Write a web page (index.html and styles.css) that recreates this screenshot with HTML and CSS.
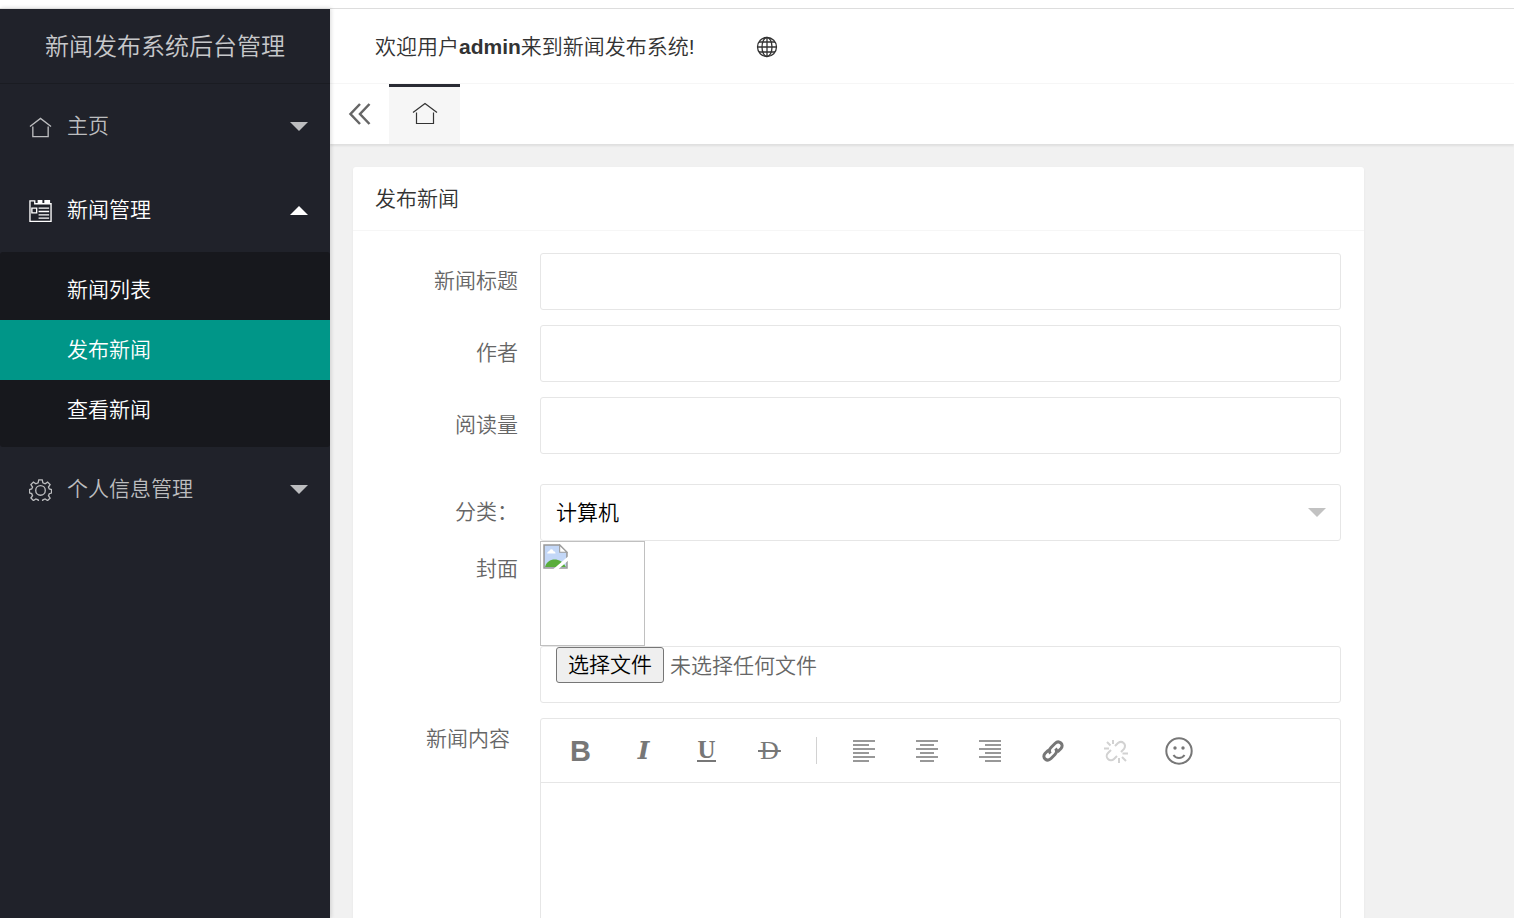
FILE: index.html
```html
<!DOCTYPE html>
<html lang="zh-CN">
<head>
<meta charset="utf-8">
<title>新闻发布系统后台管理</title>
<link rel="stylesheet" href="styles.css">
</head>
<body>
<div class="app">
  <aside class="sidebar">
    <h1 class="logo">新闻发布系统后台管理</h1>
    <nav>
      <button type="button" class="nav-item">
        <svg class="nav-icon" viewBox="0 0 24 24"><path d="M1 12 12 3.500 23 12M4 12v10.500h16V12"/></svg>
        <span class="nav-text">主页</span>
        <span class="caret"></span>
      </button>
      <button type="button" class="nav-item open" aria-expanded="true">
        <svg class="nav-icon" viewBox="0 0 24 24"><path d="M6 2H1v21.300h22V5H6zM3 9.500h5v5H3zM10 9.500h11M10 13h11M10 16.500h11M10 20h11"/><path class="solid" d="M9 1h5v4H9zM16 1h6v4h-6z"/></svg>
        <span class="nav-text">新闻管理</span>
        <span class="caret up"></span>
      </button>
      <div class="subnav">
        <a href="#list">新闻列表</a>
        <a href="#publish" class="active">发布新闻</a>
        <a href="#view">查看新闻</a>
      </div>
      <button type="button" class="nav-item">
        <svg class="nav-icon" viewBox="0 0 24 24"><circle cx="12" cy="13" r="5"/><path d="M10.200 2h3.600l.7 3 2.300 1 2.600-1.700L22 6.900l-1.700 2.600.9 2 2.300.6v3.600l-2.300.7-.9 2.100 1.700 2.500-2.600 2.500-2.600-1.600-2.300.9-.7 2.200h-3.600l-.7-2.200-2.300-.9-2.600 1.600L2 20.900l1.700-2.500-.9-2.100-2.300-.7V12l2.300-.6.9-2L2 6.900l2.600-2.600L7.200 6l2.300-1z"/></svg>
        <span class="nav-text">个人信息管理</span>
        <span class="caret"></span>
      </button>
    </nav>
  </aside>
  <div class="main">
    <header class="header">
      <span>欢迎用户<b>admin</b>来到新闻发布系统!</span>
      <button type="button" class="globe" aria-label="前台">
        <svg viewBox="0 0 22 22"><circle cx="11" cy="11" r="9.500"/><ellipse cx="11" cy="11" rx="5" ry="9.500"/><path d="M11 1.500v19M1.500 11h19M3 6h16M3 16h16"/></svg>
      </button>
    </header>
    <div class="tabs">
      <button type="button" class="tab-prev" aria-label="向左">
        <svg viewBox="0 0 24 24"><path d="M12 2 2.500 12l9.500 10M21.500 2 12 12l9.500 10"/></svg>
      </button>
      <button type="button" class="tab-home" aria-label="主页">
        <svg viewBox="0 0 26 26"><path d="M1 11.500 13 2.500l12 9M4.500 11.500v11h17v-11"/></svg>
      </button>
    </div>
    <main class="content">
      <section class="card">
        <h2 class="card-title">发布新闻</h2>
        <form class="form">
          <div class="row"><label class="label" for="title">新闻标题</label><input class="field" id="title" type="text"></div>
          <div class="row"><label class="label" for="author">作者</label><input class="field" id="author" type="text"></div>
          <div class="row"><label class="label" for="reads">阅读量</label><input class="field" id="reads" type="text"></div>
          <div class="row group-start">
            <label class="label" for="category">分类：</label>
            <div class="select-wrap"><select class="field" id="category"><option>计算机</option></select></div>
          </div>
          <div class="row attached">
            <label class="label" for="cover">封面</label>
            <div class="cover">
              <div class="preview">
                <svg viewBox="0 0 24 24"><path fill="#c3d7f7" d="M1 1h15l7 7v15H1z"/><path fill="#fff" d="M4 9c0-2 2-2 2-2 1-3 4-2 4 0 2 0 2 2 2 2z"/><path fill="#59ad3b" d="M2 22c2-9 15-10 20 0z"/><path fill="none" stroke="#999" stroke-width="1.500" d="M1 1h15l7 7v15H1z"/><path fill="#fff" stroke="#999" d="M16 1v7h7z"/><path fill="#fff" d="M24 12v4l-9 8h-5z"/></svg>
              </div>
              <div class="field file-field">
                <input id="cover" type="file">
                <span class="file-button">选择文件</span><span>未选择任何文件</span>
              </div>
            </div>
          </div>
          <div class="row">
            <label class="label label-editor" for="body">新闻内容</label>
            <div class="editor">
              <div class="toolbar">
                <button type="button" class="bold" aria-label="加粗">B</button>
                <button type="button" class="italic" aria-label="斜体">I</button>
                <button type="button" class="underline" aria-label="下划线"><span>U</span></button>
                <button type="button" class="strike" aria-label="删除线"><span>D</span></button>
                <span class="divider"></span>
                <button type="button" aria-label="左对齐"><svg class="lines" viewBox="0 0 24 24"><path d="M1 2h22M1 6h16M1 10h22M1 14h16M1 18h22M1 22h16"/></svg></button>
                <button type="button" aria-label="居中对齐"><svg class="lines" viewBox="0 0 24 24"><path d="M1 2h22M5 6h14M1 10h22M5 14h14M1 18h22M5 22h14"/></svg></button>
                <button type="button" aria-label="右对齐"><svg class="lines" viewBox="0 0 24 24"><path d="M1 2h22M7 6h16M1 10h22M7 14h16M1 18h22M7 22h16"/></svg></button>
                <button type="button" aria-label="插入链接"><svg class="link" viewBox="0 0 24 24"><path d="M9.500 14.500C7.500 12 8.500 10 10 8.500l4-4c4-4 9.500 1 6 5l-3.500 3.500M14.500 9.500c2 2.500 1 4.500-.5 6l-4 4c-4 4-9.500-1-6-5L7.500 11"/></svg></button>
                <button type="button" class="disabled" aria-label="清除链接" disabled><svg class="unlink" viewBox="0 0 24 24"><path d="m11 7 3-3c4-3 9 1 6 6l-3 3M7 11l-3 3c-4 4 2 10 6 6l3-3M9 1v4M3 3l3.500 3.500M0 9.500h5M15 19v5M18 18l4 4M18.500 14.500H24"/></svg></button>
                <button type="button" aria-label="表情"><svg class="smile" viewBox="0 0 28 28"><circle cx="14" cy="14" r="12.700"/><path d="M8.500 18c2.500 4 8.500 4 11 0"/><circle class="eye" cx="10" cy="11" r="1.700"/><circle class="eye" cx="18" cy="11" r="1.700"/></svg></button>
              </div>
              <textarea id="body"></textarea>
            </div>
          </div>
        </form>
      </section>
    </main>
  </div>
</div>
</body>
</html>
```
FILE: styles.css
```css
* { box-sizing: border-box; }
body {
  margin: 0;
  font: 350 21px/30px "Liberation Sans", "Noto Sans CJK SC", sans-serif;
  color: #333;
  background: #fff;
}
button, input, select, textarea { font: inherit; color: inherit; }
button { border: 0; padding: 0; background: none; cursor: pointer; }
svg { display: block; fill: none; stroke: currentColor; }
h1, h2 { margin: 0; font-weight: inherit; }

.app {
  display: flex;
  height: 100vh;
  padding-top: 8px;
  overflow: hidden;
}
.sidebar {
  position: relative;
  z-index: 2;
  flex: none;
  width: 330px;
  border-top: 1px solid #ddd;
  background: #20222a;
  box-shadow: 1px 0 4px rgba(0, 0, 0, .15);
}
.logo {
  height: 75px;
  font-size: 24px;
  line-height: 76px;
  text-align: center;
  color: #c7c8ca;
  border-bottom: 1px solid #1a1c22;
}
.nav-item {
  display: flex;
  align-items: center;
  width: 100%;
  height: 84px;
  padding: 0 22px 0 29px;
  color: #bcbdbf;
}
.nav-item.open { color: #fff; }
.nav-icon { width: 23px; height: 23px; margin-right: 15px; stroke-width: 1.400; }
.nav-icon .solid { fill: currentColor; stroke: none; }
.nav-text { flex: 1; text-align: left; }
.caret {
  border: 9px solid transparent;
  border-top-color: currentColor;
  border-bottom-width: 0;
}
.caret.up {
  border-top-width: 0;
  border-bottom: 9px solid currentColor;
}
.subnav { padding: 8px 0 7px; border-radius: 3px; background: #17181d; }
.subnav a {
  display: block;
  padding: 0 67px;
  line-height: 60px;
  color: #fff;
  text-decoration: none;
}
.subnav .active { background: #009688; }

.main {
  display: flex;
  flex: 1;
  flex-direction: column;
  min-width: 0;
  border-top: 1px solid #ddd;
  background: #f1f1f1;
}
.header {
  display: flex;
  flex: none;
  align-items: center;
  gap: 61px;
  height: 75px;
  padding: 2px 45px 0;
  background: #fff;
  border-bottom: 1px solid #f6f6f6;
}
.header b { font-weight: 700; }
.globe svg { width: 22px; height: 22px; stroke-width: 1.300; }
.tabs {
  display: flex;
  flex: none;
  height: 60px;
  background: #fff;
  box-shadow: 0 2px 2px rgba(0, 0, 0, .08);
}
.tab-prev { width: 59px; padding-left: 18px; color: #666; }
.tab-prev svg { width: 24px; height: 24px; stroke-width: 2.500; }
.tab-home {
  display: flex;
  justify-content: center;
  align-items: center;
  width: 71px;
  padding-bottom: 4px;
  background: #f6f6f6;
  border-top: 3px solid #292b34;
}
.tab-home svg { width: 26px; height: 26px; stroke-width: 1.200; }

.content { flex: 1; min-height: 0; padding: 23px 150px 0 23px; overflow-y: auto; scrollbar-width: none; }
.card { background: #fff; border-radius: 3px; box-shadow: 0 1px 3px rgba(0, 0, 0, .05); }
.card-title {
  padding: 0 22px;
  font-size: 21px;
  line-height: 63px;
  border-bottom: 1px solid #f6f6f6;
}
.form { display: flex; flex-direction: column; gap: 15px; padding: 22px 23px; }
.row { display: flex; align-items: flex-start; color: #666; }
.group-start { margin-top: 15px; }
.attached { margin-top: -15px; }
.label { flex: none; width: 164px; padding: 13px 22px; text-align: right; }
.label-editor { padding: 6px 30px; }
.field {
  flex: 1;
  width: 100%;
  min-width: 0;
  height: 57px;
  padding: 0 15px;
  border: 1px solid #e6e6e6;
  border-radius: 3px;
  background: #fff;
}
.select-wrap { position: relative; flex: 1; }
.select-wrap .field { display: block; appearance: none; color: #000; }
.select-wrap::after {
  content: "";
  position: absolute;
  top: 24px;
  right: 15px;
  border: 9px solid transparent;
  border-top-color: #c2c2c2;
  border-bottom-width: 0;
  pointer-events: none;
}
.cover { flex: 1; }
.preview { width: 105px; height: 105px; padding: 2px; border: 1px solid #c0c0c0; }
.preview svg { width: 25px; height: 25px; stroke: none; }
.file-field { position: relative; display: flex; align-items: flex-start; gap: 6px; line-height: 38px; }
.file-field input { position: absolute; inset: 0; width: 100%; opacity: 0; }
.file-button {
  padding: 0 11px;
  line-height: 34px;
  color: #000;
  background: #efefef;
  border: 1px solid #767676;
  border-radius: 3px;
}
.editor { flex: 1; border: 1px solid #e6e6e6; border-radius: 3px; }
.toolbar { display: flex; height: 64px; padding: 0 8px; border-bottom: 1px solid #e6e6e6; color: #777; }
.toolbar button { display: flex; justify-content: center; align-items: center; width: 63px; }
.toolbar .disabled { color: #d2d2d2; }
.toolbar .bold { font-size: 29px; font-weight: 700; }
.toolbar .italic { font: italic 700 25px "DejaVu Serif", serif; }
.toolbar .underline, .toolbar .strike { font: 400 26px/20px "Liberation Serif", serif; }
.toolbar .underline { font-size: 25px; font-weight: 700; }
.underline span { border-bottom: 2px solid; }
.strike span { padding: 0 2px; background: linear-gradient(currentColor, currentColor) center / 100% 2px no-repeat; }
.divider { width: 1px; height: 27px; margin: 18px 15px; background: #d2d2d2; }
.lines, .link, .unlink { width: 24px; height: 24px; }
.lines { stroke-width: 1.500; }
.link { stroke-width: 3; }
.unlink { stroke-width: 2; }
.smile { width: 28px; height: 28px; stroke-width: 2; }
.smile .eye { fill: currentColor; stroke: none; }
textarea { display: block; width: 100%; height: 420px; padding: 15px; border: 0; resize: none; outline: 0; background: none; }
```
